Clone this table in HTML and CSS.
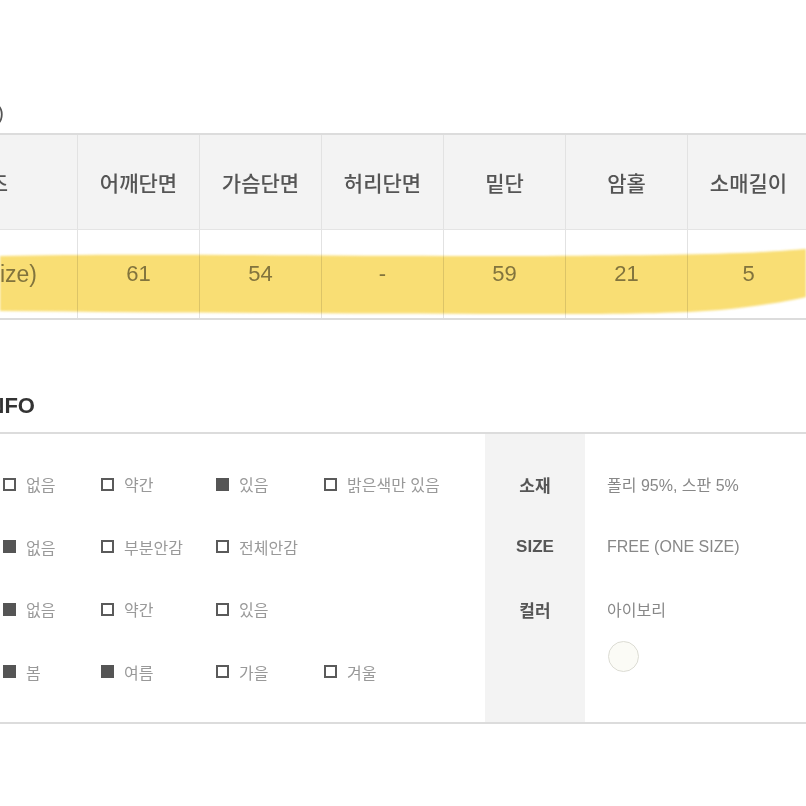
FILE: index.html
```html
<!DOCTYPE html>
<html lang="ko">
<head>
<meta charset="utf-8">
<title>Size & Info</title>
<link rel="stylesheet" href="styles.css">
</head>
<body>
<div class="page">
  <h2 class="title title-size">SIZE (cm)</h2>

  <div class="size-wrap">
    <div class="size-row size-head">
      <div class="cell cell-first head-first">사이즈</div>
      <div class="cell">어깨단면</div>
      <div class="cell">가슴단면</div>
      <div class="cell">허리단면</div>
      <div class="cell">밑단</div>
      <div class="cell">암홀</div>
      <div class="cell">소매길이</div>
    </div>
    <div class="size-row size-data">
      <div class="cell cell-first data-first">free(one size)</div>
      <div class="cell">61</div>
      <div class="cell">54</div>
      <div class="cell">-</div>
      <div class="cell">59</div>
      <div class="cell">21</div>
      <div class="cell">5</div>
    </div>
    <svg class="marker" width="806" height="72" viewBox="0 0 806 72" aria-hidden="true">
      <path d="M0,9 C120,6 300,9 480,9 C600,9 680,8 740,6 C770,5 792,3 806,2 L806,50 C790,54 760,59 720,63 C680,66 640,67 560,67 C400,67 200,66 0,64 Z" fill="#f9de74"/>
    </svg>
  </div>

  <h2 class="title title-info">PRODUCT INFO</h2>

  <div class="info">
    <div class="info-checks">
      <div class="check-row">
        <span class="opt"><i class="box"></i>없음</span>
        <span class="opt"><i class="box"></i>약간</span>
        <span class="opt"><i class="box on"></i>있음</span>
        <span class="opt"><i class="box"></i>밝은색만 있음</span>
      </div>
      <div class="check-row">
        <span class="opt"><i class="box on"></i>없음</span>
        <span class="opt"><i class="box"></i>부분안감</span>
        <span class="opt"><i class="box"></i>전체안감</span>
      </div>
      <div class="check-row">
        <span class="opt"><i class="box on"></i>없음</span>
        <span class="opt"><i class="box"></i>약간</span>
        <span class="opt"><i class="box"></i>있음</span>
      </div>
      <div class="check-row">
        <span class="opt"><i class="box on"></i>봄</span>
        <span class="opt"><i class="box on"></i>여름</span>
        <span class="opt"><i class="box"></i>가을</span>
        <span class="opt"><i class="box"></i>겨울</span>
      </div>
    </div>
    <div class="info-labels">
      <div class="lbl">소재</div>
      <div class="lbl">SIZE</div>
      <div class="lbl">컬러</div>
    </div>
    <div class="info-values">
      <div class="val">폴리 95%, 스판 5%</div>
      <div class="val">FREE (ONE SIZE)</div>
      <div class="val">아이보리</div>
      <div class="val-swatch"><span class="swatch"></span></div>
    </div>
  </div>
</div>
</body>
</html>
```

FILE: styles.css
```css
html, body {
  margin: 0;
  padding: 0;
  overflow: hidden;
  background: #ffffff;
}

body {
  font-family: "Liberation Sans", "Noto Sans CJK KR", sans-serif;
  color: #555;
}

.page {
  width: 806px;
  height: 806px;
  overflow: hidden;
}

.title {
  margin: 0;
  height: 30px;
  line-height: 30px;
  white-space: nowrap;
  text-align: right;
}

.title-size {
  margin: 98px 0 5px -300px;
  width: 304px;
  font-size: 20px;
  font-weight: 400;
  color: #555;
}

/* size table */
.size-wrap {
  position: relative;
  margin-left: -117px;
  width: 926px;
  border-top: 2px solid #dcdcdc;
  border-bottom: 2px solid #dcdcdc;
}

.size-row {
  display: grid;
  grid-template-columns: 194px repeat(6, 122px);
}

.size-head {
  height: 94px;
  background: #f3f3f3;
  border-bottom: 1px solid #e4e4e4;
  font-family: "Noto Sans CJK KR", "Liberation Sans", sans-serif;
  font-size: 21px;
  font-weight: 500;
  color: #555;
}

.size-data {
  height: 88px;
  background: #ffffff;
  font-size: 22px;
  color: #858585;
}

.cell {
  display: flex;
  align-items: center;
  justify-content: center;
  border-left: 1px solid #e2e2e2;
  white-space: nowrap;
}

.cell-first {
  border-left: 0;
  justify-content: flex-end;
}

.head-first {
  padding-right: 69px;
}

.data-first {
  padding-right: 40px;
  font-size: 23px;
}

.marker {
  position: absolute;
  left: 117px;
  top: 112px;
  mix-blend-mode: multiply;
  filter: blur(0.8px);
  pointer-events: none;
}

/* info */
.title-info {
  margin: 71px 0 11px -300px;
  width: 335px;
  font-size: 22px;
  font-weight: 700;
  color: #333;
}

.info {
  display: flex;
  border-top: 2px solid #dcdcdc;
  border-bottom: 2px solid #dcdcdc;
}

.info-checks {
  width: 482px;
  padding: 19px 0 19px 3px;
}

.check-row {
  display: grid;
  grid-template-columns: 98px 115px 108px 1fr;
  height: 62.5px;
  align-items: center;
}

.opt {
  display: flex;
  align-items: center;
  gap: 10px;
  font-family: "Noto Sans CJK KR", sans-serif;
  font-size: 16px;
  color: #999;
  white-space: nowrap;
}

.box {
  display: block;
  width: 13px;
  height: 13px;
  box-sizing: border-box;
  border: 2px solid #5a5a5a;
  flex: none;
}

.box.on {
  background: #555;
  border-color: #555;
}

.info-labels {
  width: 100px;
  background: #f3f3f3;
  padding: 19px 0;
}

.lbl {
  height: 62.5px;
  display: flex;
  align-items: center;
  justify-content: center;
  font-family: "Liberation Sans", "Noto Sans CJK KR", sans-serif;
  font-size: 17px;
  font-weight: 700;
  color: #555;
}

.info-values {
  flex: 1;
  padding: 19px 0 0 22px;
}

.val {
  height: 62.5px;
  display: flex;
  align-items: center;
  font-family: "Liberation Sans", "Noto Sans CJK KR", sans-serif;
  font-size: 16px;
  color: #888;
  white-space: nowrap;
}

.val-swatch {
  padding-left: 1px;
}

.swatch {
  display: block;
  width: 31px;
  height: 31px;
  box-sizing: border-box;
  border-radius: 50%;
  border: 1px solid #dcdcd4;
  background: #fbfbf6;
}
```
